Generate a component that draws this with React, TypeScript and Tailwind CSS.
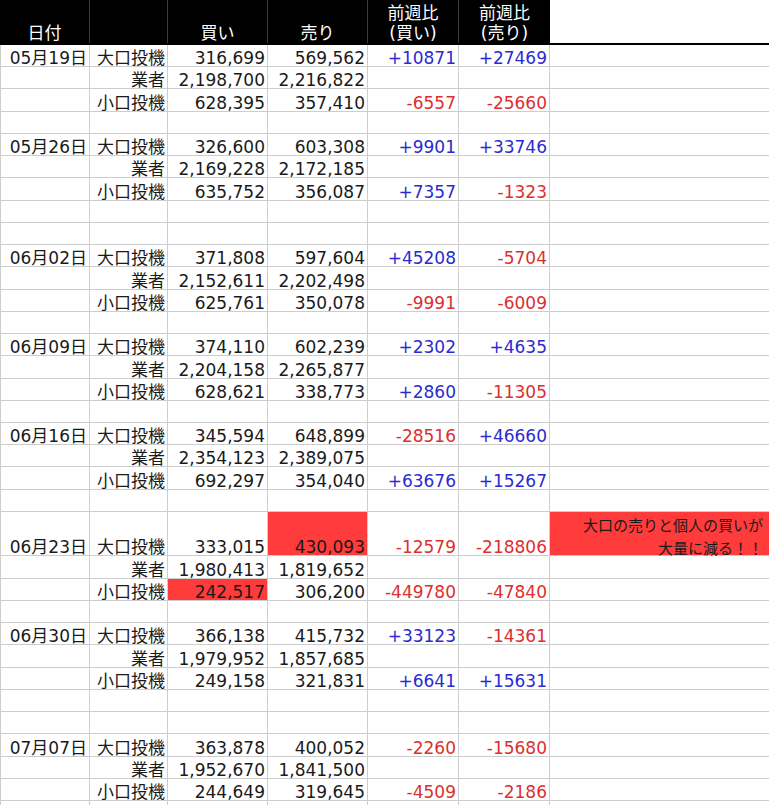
import React from "react";

type Row = {
  date?: string;
  cat?: string;
  buy?: string;
  sell?: string;
  db?: string;
  ds?: string;
  tall?: boolean;
  redBuy?: boolean;
  redSell?: boolean;
  note?: boolean;
};

const E: Row = {};

const rows: Row[] = [
  { date: "05月19日", cat: "大口投機", buy: "316,699", sell: "569,562", db: "+10871", ds: "+27469" },
  { cat: "業者", buy: "2,198,700", sell: "2,216,822" },
  { cat: "小口投機", buy: "628,395", sell: "357,410", db: "-6557", ds: "-25660" },
  E,
  { date: "05月26日", cat: "大口投機", buy: "326,600", sell: "603,308", db: "+9901", ds: "+33746" },
  { cat: "業者", buy: "2,169,228", sell: "2,172,185" },
  { cat: "小口投機", buy: "635,752", sell: "356,087", db: "+7357", ds: "-1323" },
  E,
  E,
  { date: "06月02日", cat: "大口投機", buy: "371,808", sell: "597,604", db: "+45208", ds: "-5704" },
  { cat: "業者", buy: "2,152,611", sell: "2,202,498" },
  { cat: "小口投機", buy: "625,761", sell: "350,078", db: "-9991", ds: "-6009" },
  E,
  { date: "06月09日", cat: "大口投機", buy: "374,110", sell: "602,239", db: "+2302", ds: "+4635" },
  { cat: "業者", buy: "2,204,158", sell: "2,265,877" },
  { cat: "小口投機", buy: "628,621", sell: "338,773", db: "+2860", ds: "-11305" },
  E,
  { date: "06月16日", cat: "大口投機", buy: "345,594", sell: "648,899", db: "-28516", ds: "+46660" },
  { cat: "業者", buy: "2,354,123", sell: "2,389,075" },
  { cat: "小口投機", buy: "692,297", sell: "354,040", db: "+63676", ds: "+15267" },
  E,
  { date: "06月23日", cat: "大口投機", buy: "333,015", sell: "430,093", db: "-12579", ds: "-218806", tall: true, redSell: true, note: true },
  { cat: "業者", buy: "1,980,413", sell: "1,819,652" },
  { cat: "小口投機", buy: "242,517", sell: "306,200", db: "-449780", ds: "-47840", redBuy: true },
  E,
  { date: "06月30日", cat: "大口投機", buy: "366,138", sell: "415,732", db: "+33123", ds: "-14361" },
  { cat: "業者", buy: "1,979,952", sell: "1,857,685" },
  { cat: "小口投機", buy: "249,158", sell: "321,831", db: "+6641", ds: "+15631" },
  E,
  E,
  { date: "07月07日", cat: "大口投機", buy: "363,878", sell: "400,052", db: "-2260", ds: "-15680" },
  { cat: "業者", buy: "1,952,670", sell: "1,841,500" },
  { cat: "小口投機", buy: "244,649", sell: "319,645", db: "-4509", ds: "-2186" },
  E,
  E,
];

const diffColor = (v?: string) =>
  v && v.startsWith("+") ? "text-[#2b2bd0]" : "text-[#dc2f2f]";

const base =
  "flex items-end justify-end pr-[2px] pb-[1px] border-r border-b border-[#cdcdcd] leading-[14px] whitespace-nowrap";

function DataRow({ r }: { r: Row }) {
  const h = r.tall ? "h-[44.47px]" : "h-[22.235px]";
  return (
    <div className={`flex ${h}`}>
      <div className={`${base} w-[90px] shrink-0 border-l`}>{r.date}</div>
      <div className={`${base} w-[78px] shrink-0`}>{r.cat}</div>
      <div className={`${base} w-[100px] shrink-0 ${r.redBuy ? "bg-[#ff3b3b]" : ""}`}>{r.buy}</div>
      <div className={`${base} w-[100px] shrink-0 ${r.redSell ? "bg-[#ff3b3b]" : ""}`}>{r.sell}</div>
      <div className={`${base} w-[91px] shrink-0 ${diffColor(r.db)}`}>{r.db}</div>
      <div className={`${base} w-[91px] shrink-0 ${diffColor(r.ds)}`}>{r.ds}</div>
      {r.note ? (
        <div className="flex flex-1 flex-col items-end justify-start pr-[6px] pt-[3px] border-b border-[#cdcdcd] bg-[#ff3b3b] text-[15px] leading-[23px] text-[#1a1a1a] whitespace-nowrap">
          <span>大口の売りと個人の買いが</span>
          <span>大量に減る！！</span>
        </div>
      ) : (
        <div className="flex-1 border-b border-[#cdcdcd]" />
      )}
    </div>
  );
}

const hcell =
  "flex flex-col items-center bg-black text-white border-r border-[#3c3c3c] shrink-0";
const hsingle = `${hcell} justify-end leading-[20px]`;
const hdouble = `${hcell} justify-start pt-[3px] leading-[20px]`;

export default function App() {
  return (
    <div
      className="w-[769px] bg-white text-[17px] text-[#1a1a1a] overflow-hidden"
      style={{ fontFamily: '"DejaVu Sans", "Noto Sans CJK JP", sans-serif' }}
    >
      <div className="flex h-[45px] border-b-2 border-black">
        <div className={`${hsingle} w-[90px]`}>日付</div>
        <div className={`${hsingle} w-[78px]`}></div>
        <div className={`${hsingle} w-[100px]`}>買い</div>
        <div className={`${hsingle} w-[100px]`}>売り</div>
        <div className={`${hdouble} w-[91px]`}>
          <span>前週比</span>
          <span>(買い)</span>
        </div>
        <div className={`${hdouble} w-[91px] border-r-0`}>
          <span>前週比</span>
          <span>(売り)</span>
        </div>
        <div className="flex-1 bg-white" />
      </div>
      {rows.map((r, i) => (
        <DataRow key={i} r={r} />
      ))}
    </div>
  );
}
